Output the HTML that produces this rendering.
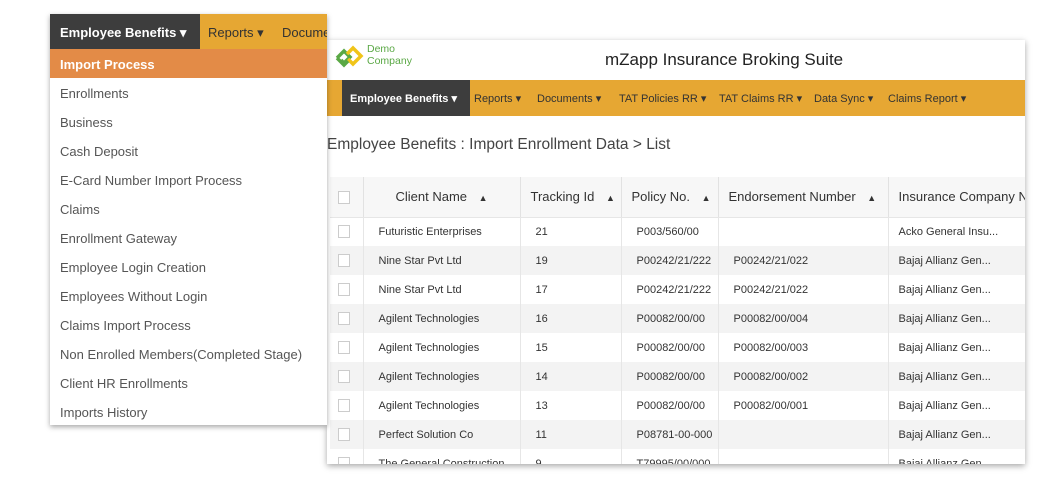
<!DOCTYPE html>
<html><head><style>
*{margin:0;padding:0;box-sizing:border-box}
body{width:1056px;height:500px;background:#fff;position:relative;overflow:hidden;font-family:"Liberation Sans",sans-serif;color:#333}
.win{position:absolute;left:327px;top:40px;width:698px;height:424px;background:#fff;box-shadow:0 2px 6px rgba(0,0,0,.35);overflow:hidden}
.title{position:absolute;left:278px;top:10px;font-size:17px;color:#222}
.logo{position:absolute;left:6px;top:4px}
.lt{position:absolute;left:40px;top:3px;color:#5aa845;font-size:10.5px;line-height:12px}
.nav{position:absolute;left:0;top:40px;width:698px;height:36px;background:#e6a733}
.nav span{position:absolute;top:12px;font-size:11px;color:#333;white-space:nowrap}
.nav .act{left:15px;top:0;height:36px;width:128px;background:#3d3d3d;color:#fff;font-weight:bold;padding:12px 0 0 8px}
.crumb{position:absolute;left:0;top:96px;font-size:15.5px;color:#444}
table{position:absolute;left:3px;top:137px;border-collapse:collapse;font-size:11px;width:695px;table-layout:fixed}
th{height:40px;font-weight:normal;font-size:13px;color:#333;background:#f7f7f7;border-right:1px solid #e2e2e2;text-align:left;padding-left:10px;white-space:nowrap;overflow:hidden}
td{height:29px;border-right:1px solid #e6e6e6;padding-left:15px;color:#333;white-space:nowrap;overflow:hidden}
tr:nth-child(odd) td{background:#f3f3f3}
tr.h th{border-bottom:1px solid #e6e6e6}
.cb{display:inline-block;width:12px;height:13px;border:1px solid #ccc;background:#fff;vertical-align:middle}
td.c,th.c{padding-left:8px}
.up{font-size:9px;margin-left:8px}
.dd{position:absolute;left:50px;top:14px;width:277px;height:411px;background:#fff;box-shadow:0 2px 5px rgba(0,0,0,.35)}
.dnav{height:35px;background:#e6a733;position:relative;overflow:hidden}
.dnav .a{position:absolute;left:0;top:0;width:150px;height:35px;background:#3d3d3d;color:#fff;font-weight:bold;font-size:13px;padding:11px 0 0 10px}
.dnav span{position:absolute;top:11px;font-size:13px;color:#333;white-space:nowrap}
.it{height:29px;font-size:13px;color:#555;padding:8px 0 0 10px}
.it.on{background:#e38b47;color:#fff;font-weight:bold}
</style></head><body>
<div class="win">
 <svg class="logo" width="32" height="28" viewBox="0 0 32 28"><path d="M4 14 L11 7 L17 13 L11 19 L8 16" fill="none" stroke="#5aa845" stroke-width="3.5"/><path d="M14 10 L20 4 L28 12 L20 20 L15 15" fill="none" stroke="#f0c419" stroke-width="3.5"/><path d="M4 14 L11 21 L15 17" fill="none" stroke="#5aa845" stroke-width="3.5"/></svg>
 <div class="lt">Demo<br>Company</div>
 <div class="title">mZapp Insurance Broking Suite</div>
 <div class="nav">
  <span class="act">Employee Benefits ▾</span>
  <span style="left:147px">Reports ▾</span>
  <span style="left:210px">Documents ▾</span>
  <span style="left:292px">TAT Policies RR ▾</span>
  <span style="left:392px">TAT Claims RR ▾</span>
  <span style="left:487px">Data Sync ▾</span>
  <span style="left:561px">Claims Report ▾</span>
 </div>
 <div class="crumb">Employee Benefits : Import Enrollment Data &gt; List</div>
 <table>
  <colgroup><col style="width:33px"><col style="width:157px"><col style="width:101px"><col style="width:97px"><col style="width:170px"><col style="width:137px"></colgroup>
  <tr class="h"><th class="c"><span class="cb"></span></th><th style="padding-left:32px">Client Name <span class="up">▲</span></th><th>Tracking Id <span class="up">▲</span></th><th>Policy No. <span class="up">▲</span></th><th>Endorsement Number <span class="up">▲</span></th><th>Insurance Company N</th></tr>
  <tr><td class="c"><span class="cb"></span></td><td>Futuristic Enterprises</td><td>21</td><td>P003/560/00</td><td></td><td style="padding-left:10px">Acko General Insu...</td></tr>
  <tr><td class="c"><span class="cb"></span></td><td>Nine Star Pvt Ltd</td><td>19</td><td>P00242/21/222</td><td>P00242/21/022</td><td style="padding-left:10px">Bajaj Allianz Gen...</td></tr>
  <tr><td class="c"><span class="cb"></span></td><td>Nine Star Pvt Ltd</td><td>17</td><td>P00242/21/222</td><td>P00242/21/022</td><td style="padding-left:10px">Bajaj Allianz Gen...</td></tr>
  <tr><td class="c"><span class="cb"></span></td><td>Agilent Technologies</td><td>16</td><td>P00082/00/00</td><td>P00082/00/004</td><td style="padding-left:10px">Bajaj Allianz Gen...</td></tr>
  <tr><td class="c"><span class="cb"></span></td><td>Agilent Technologies</td><td>15</td><td>P00082/00/00</td><td>P00082/00/003</td><td style="padding-left:10px">Bajaj Allianz Gen...</td></tr>
  <tr><td class="c"><span class="cb"></span></td><td>Agilent Technologies</td><td>14</td><td>P00082/00/00</td><td>P00082/00/002</td><td style="padding-left:10px">Bajaj Allianz Gen...</td></tr>
  <tr><td class="c"><span class="cb"></span></td><td>Agilent Technologies</td><td>13</td><td>P00082/00/00</td><td>P00082/00/001</td><td style="padding-left:10px">Bajaj Allianz Gen...</td></tr>
  <tr><td class="c"><span class="cb"></span></td><td>Perfect Solution Co</td><td>11</td><td>P08781-00-000</td><td></td><td style="padding-left:10px">Bajaj Allianz Gen...</td></tr>
  <tr><td class="c"><span class="cb"></span></td><td>The General Construction</td><td>9</td><td>T79995/00/000</td><td></td><td style="padding-left:10px">Bajaj Allianz Gen...</td></tr>
 </table>
</div>
<div class="dd">
 <div class="dnav"><div class="a">Employee Benefits ▾</div><span style="left:158px">Reports ▾</span><span style="left:232px">Documents</span></div>
 <div class="it on">Import Process</div>
 <div class="it">Enrollments</div>
 <div class="it">Business</div>
 <div class="it">Cash Deposit</div>
 <div class="it">E-Card Number Import Process</div>
 <div class="it">Claims</div>
 <div class="it">Enrollment Gateway</div>
 <div class="it">Employee Login Creation</div>
 <div class="it">Employees Without Login</div>
 <div class="it">Claims Import Process</div>
 <div class="it">Non Enrolled Members(Completed Stage)</div>
 <div class="it">Client HR Enrollments</div>
 <div class="it">Imports History</div>
</div>
</body></html>
